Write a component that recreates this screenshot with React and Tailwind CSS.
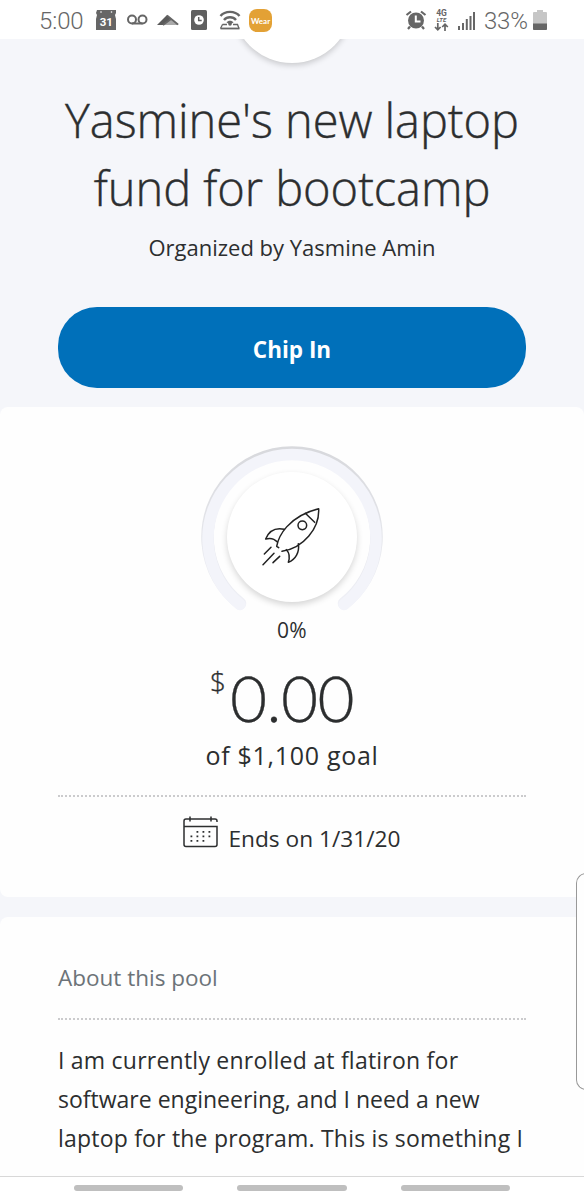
function StatusBar() {
  return (
    <header className="relative z-10 flex h-[39px] items-center bg-white pr-[37px] pl-[39px] pt-px text-[#666]">
      <span className="w-[57px] shrink-0 pt-[2px] font-['Roboto'] text-[24px] leading-none font-light tracking-[-0.1px] whitespace-nowrap">5:00</span>
      <svg className="h-[22px] w-[21px] shrink-0" viewBox="0 0 21 22" fill="currentColor">
        <path d="M1 1h19v3l-1 2 1 4v11H0V10l1-4-1-2z" />
        <circle cx="5" cy="3" r=".8" fill="#fff" />
        <circle cx="15.500" cy="3" r=".8" fill="#fff" />
        <text x="10.300" y="17" textAnchor="middle" fill="#fff" fontFamily="Roboto" fontSize="11.500" fontWeight="700">31</text>
      </svg>
      <svg className="ml-[10px] h-[12px] w-[21px] shrink-0" viewBox="0 0 21 12" fill="none" stroke="currentColor" strokeWidth="2">
        <circle cx="5" cy="5.500" r="4" />
        <circle cx="15.500" cy="5.500" r="4" />
        <path d="M5 9.500h10.500" />
      </svg>
      <svg className="ml-[9px] h-[12px] w-[22px] shrink-0" viewBox="0 0 22 12">
        <path d="M0 11L10 1l4 3.500L6 11z" fill="#5a5a5a" />
        <path d="M6 11l8-6.500L22 11z" fill="#aaa" />
        <path d="M10 1.500l11 9M6 11l8-6" fill="none" stroke="#666" strokeWidth="1.700" />
      </svg>
      <svg className="ml-[12px] h-[20px] w-[16px] shrink-0" viewBox="0 0 16 20">
        <rect width="16" height="20" rx="1.500" fill="#5f5f5f" />
        <circle cx="8" cy="10" r="4.800" fill="#fff" />
        <path d="M7.700 7v3.400h3" fill="none" stroke="#5f5f5f" strokeWidth="1.500" />
      </svg>
      <svg className="ml-[12px] h-[20px] w-[22px] shrink-0" viewBox="0 0 22 20" fill="none" stroke="currentColor" strokeWidth="2.400">
        <path d="M1.500 6C6 .500 16 .500 20.500 6M5 10c3-3.700 9-3.700 12 0" />
        <path d="M3.500 14.500h4.500M14 14.500h4.500l1.500 4M3.500 14.500l-2 4" strokeWidth="1.300" />
        <path d="M1.500 18.500h19" strokeWidth="1.800" />
        <path d="M7.500 12.300c1.500-2.200 5.500-2.200 7 0l-2 1.500h-3z" fill="currentColor" stroke="none" />
        <circle cx="11" cy="14" r="1.800" fill="currentColor" stroke="none" />
      </svg>
      <span className="ml-[8px] flex h-[23px] w-[23px] shrink-0 items-center justify-center rounded-[8px] bg-[#e3a135] pt-px font-['Lato'] text-[8px] font-bold text-white">Wear</span>

      <svg className="ml-auto h-[20px] w-[22px] shrink-0" viewBox="0 0 22 20">
        <circle cx="11" cy="10.500" r="8" fill="#666" />
        <path d="M1.500 5L6 1.500M20.500 5L16 1.500M5 16.500l-2 2.500M17 16.500l2 2.500" stroke="#666" strokeWidth="2.200" fill="none" />
        <path d="M10.800 5.500v6h4.700" stroke="#fff" strokeWidth="2" fill="none" />
      </svg>
      <div className="ml-[7px] flex h-[21px] w-[15px] shrink-0 flex-col items-center font-['Roboto'] whitespace-nowrap">
        <span className="h-[7px] text-[8.5px] leading-[7px] font-bold">4G</span>
        <span className="h-[6px] text-[6px] leading-[6px] font-bold italic">LTE</span>
        <svg className="h-[8px] w-[15px] shrink-0" viewBox="0 0 15 8" fill="none" stroke="currentColor" strokeWidth="1.700">
          <path d="M3.800 0v6.500M1 4l2.800 2.800L6.600 4M11 8V1.500M8.200 4L11 1.200 13.800 4" />
        </svg>
      </div>
      <svg className="ml-[9px] h-[19px] w-[18px] shrink-0" viewBox="0 0 18 19" fill="currentColor">
        <path d="M0 15h2v4H0zM4 12h2v7H4zM7.800 8h2v11h-2zM11.500 5h2v14h-2zM15 1h2v18h-2z" />
      </svg>
      <span className="ml-[8px] w-[48px] shrink-0 pt-[2px] font-['Roboto'] text-[24px] leading-none font-light tracking-[-0.2px] whitespace-nowrap">33%</span>
      <svg className="ml-px h-[20px] w-[14px] shrink-0" viewBox="0 0 14 20">
        <path d="M4 0h6v2h3a1 1 0 0 1 1 1v16a1 1 0 0 1-1 1H1a1 1 0 0 1-1-1V3a1 1 0 0 1 1-1h3z" fill="#c6c6c6" />
        <path d="M0 13.500h14V19a1 1 0 0 1-1 1H1a1 1 0 0 1-1-1z" fill="#666" />
      </svg>
    </header>
  )
}

function Rocket() {
  return (
    <svg className="mr-[2px] h-[60px] w-[60px]" viewBox="0 0 180 180" fill="none" stroke="#222" strokeWidth="4.500" strokeLinecap="round" strokeLinejoin="round">
      <path d="M53 122l-6-4C52 90 80 28 173 5c3 58-45 118-110 128" />
      <path d="M133 19l28 27" />
      <circle cx="124" cy="55" r="13" />
      <path d="M70 67C42 61 23 74 14 96c14-4 27 0 35 9" />
      <path d="M112 110c4 26-8 47-30 56 5-16 3-29-6-38" />
      <path d="M30 121l-20 20M39 139L6 173M56 148l-20 19" />
    </svg>
  )
}

function Progress() {
  return (
    <div className="relative h-[176px] w-[200px]">
      <svg className="h-[176px] w-[200px]" viewBox="0 0 200 176" fill="none" strokeLinecap="round">
        <defs>
          <linearGradient id="rim" x1="0" y1="0" x2="0" y2="1">
            <stop offset="0" stopColor="#d8d9dd" />
            <stop offset="1" stopColor="#eff0f6" />
          </linearGradient>
        </defs>
        <path d="M48 165.500A84.500 84.500 0 1 1 152 165.500" stroke="url(#rim)" strokeWidth="12.500" />
        <path d="M48 166.500A84 84 0 1 1 152 166.500" stroke="#f3f4fa" strokeWidth="11.500" />
      </svg>
      <div className="absolute top-[34px] left-[35px] flex h-[130px] w-[130px] items-center justify-center rounded-full bg-white shadow-[0_3px_6px_rgba(0,0,0,0.16)]">
        <Rocket />
      </div>
    </div>
  )
}

function CalendarIcon() {
  return (
    <svg className="h-[32px] w-[35px]" viewBox="0 0 35 32" fill="none" stroke="#2c2e2f" strokeWidth="1.500">
      <path d="M34 6V5a2 2 0 0 0-2-2H3a2 2 0 0 0-2 2v23.500a2 2 0 0 0 2 2h29a2 2 0 0 0 2-2V10.500H1M7 .5v5M28 .5v5" />
      <path d="M13.500 15.800h14M7.500 20.300h20M7.500 24.800h14" strokeWidth="1.800" strokeDasharray="1.800 4.200" />
    </svg>
  )
}

export default function App() {
  return (
    <div className="relative flex h-[1200px] w-[584px] flex-col overflow-hidden bg-[#f5f6fa] font-['Open_Sans',sans-serif] text-[#2c2e2f]">
      <StatusBar />

      <section className="relative flex h-[368px] shrink-0 flex-col items-center">
        <div className="absolute top-[-96px] h-[120px] w-[120px] rounded-full bg-white shadow-[0_2px_6px_rgba(0,0,0,0.2)]" />
        <h1 className="mt-[47px] text-center text-[47px] leading-[68px] font-light tracking-[-0.05px] whitespace-nowrap [-webkit-text-stroke:0.4px_#2c2e2f]">
          <span className="block">Yasmine's new laptop</span>
          <span className="block">fund for bootcamp</span>
        </h1>
        <p className="mt-[8px] text-[22px] leading-[34px] whitespace-nowrap">Organized by Yasmine Amin</p>
        <button className="mt-auto mb-[19px] h-[81px] w-[468px] rounded-[39px] bg-[#0070ba] pt-[4px] text-[22.5px] font-bold text-white">Chip In</button>
      </section>

      <section className="flex h-[490px] shrink-0 flex-col items-center rounded-[8px] bg-[#fefefe] px-[58px] pt-[31px]">
        <Progress />
        <p className="mt-[6px] text-[21px] leading-[20px] tracking-[0.4px]">0%</p>
        <div className="mt-[26px] mr-[20px] flex h-[64px] items-start font-light">
          <span className="mt-[1px] mr-[4px] text-[28px] leading-[28px] [-webkit-text-stroke:0.3px_#2c2e2f]">$</span>
          <span className="font-['Lato'] text-[64px] leading-[64px] tracking-[-0.6px] [-webkit-text-stroke:0.3px_#2c2e2f]">0.00</span>
        </div>
        <p className="mt-[8px] text-[25px] leading-[34px] tracking-[0.7px] whitespace-nowrap">of $1,100 goal</p>
        <hr className="mt-[23px] w-full border-t-2 border-dotted border-[#cbcbcd]" />
        <div className="mt-[19px] flex items-start gap-[10px]">
          <CalendarIcon />
          <span className="mt-[6px] text-[22.7px] leading-[34px] whitespace-nowrap">Ends on 1/31/20</span>
        </div>
      </section>

      <section className="mt-[20px] flex-1 rounded-t-[8px] bg-[#fefefe] px-[58px] pt-[44px]">
        <h2 className="text-[22.5px] leading-[34px] text-[#6c7378]">About this pool</h2>
        <hr className="mt-[23px] border-t-2 border-dotted border-[#cbcbcd]" />
        <p className="mt-[21px] text-[23px] leading-[39px] whitespace-nowrap">
          <span className="block tracking-[0.23px]">I am currently enrolled at flatiron for</span>
          <span className="block">software engineering, and I need a new</span>
          <span className="block tracking-[0.2px]">laptop for the program. This is something I</span>
        </p>
      </section>

      <footer className="flex h-[24px] shrink-0 justify-center gap-[54px] border-t border-[#d8d8d8] bg-white pt-[8px]">
        <span className="h-[6px] w-[109px] rounded-full bg-[#bfbfbf]" />
        <span className="h-[6px] w-[110px] rounded-full bg-[#bfbfbf]" />
        <span className="h-[6px] w-[109px] rounded-full bg-[#bfbfbf]" />
      </footer>

      <div className="absolute top-[873px] right-[-2px] h-[217px] w-[10px] rounded-l-[10px] border border-r-0 border-[#999] bg-[#fefefe]" />
    </div>
  )
}
